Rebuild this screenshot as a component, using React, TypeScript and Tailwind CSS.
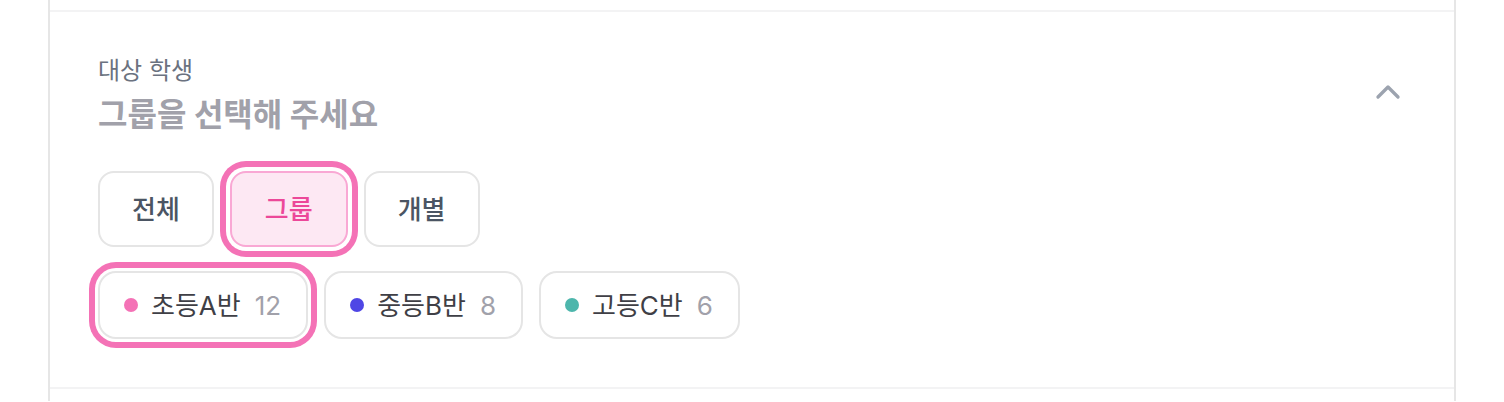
import { ChevronUp } from 'lucide-react';

const modes = [
  { id: 'all', label: '전체' },
  { id: 'group', label: '그룹' },
  { id: 'each', label: '개별' },
];

const groups = [
  { id: 'a', name: '초등A반', count: 12, dot: 'bg-[#f472b6]', focused: true },
  { id: 'b', name: '중등B반', count: 8, dot: 'bg-[#4f46e5]', focused: false },
  { id: 'c', name: '고등C반', count: 6, dot: 'bg-[#4db6ac]', focused: false },
];

export default function App() {
  const selected = 'group';

  return (
    <div className="min-h-[402px] bg-white px-12 font-['Inter','Noto_Sans_CJK_KR',sans-serif]">
      <div className="border-x-2 border-[#e6e6e6] pt-[10px] pb-[12px]">
        <section className="border-y-2 border-[#f3f3f4] px-12 pt-[44px] pb-[48px]">
          <div className="flex items-start justify-between">
            <div>
              <p className="text-[24px] leading-[30px] text-[#6b7280]">대상 학생</p>
              <h2 className="mt-[9px] text-[32px] font-bold leading-[40px] text-[#a1a1aa]">
                그룹을 선택해 주세요
              </h2>
            </div>
            <button className="mt-[16px] -mr-[2px] text-[#9ca3af]">
              <ChevronUp className="h-10 w-10" strokeWidth={2} />
            </button>
          </div>

          <div className="mt-[36px] flex gap-4">
            {modes.map((m) => {
              const active = m.id === selected;
              return (
                <button
                  key={m.id}
                  className={
                    active
                      ? 'flex h-[76px] items-center rounded-[16px] border-2 border-[#f9a8d4] bg-[#fde8f3] px-[33px] text-[26px] font-medium text-[#ec4899] ring-[6px] ring-[#f472b6] ring-offset-4 ring-offset-white'
                      : 'flex h-[76px] items-center rounded-[16px] border-2 border-[#e5e5e5] bg-white px-[32px] text-[26px] font-medium text-[#4b5563]'
                  }
                >
                  {m.label}
                </button>
              );
            })}
          </div>

          <div className="mt-[24px] flex gap-4">
            {groups.map((g) => (
              <button
                key={g.id}
                className={
                  'flex h-[68px] items-center rounded-[18px] border-2 border-[#e5e5e5] bg-white pl-[24px] pr-[25px] text-[26px] ' +
                  (g.focused ? 'ring-[6px] ring-[#f472b6] ring-offset-[3px] ring-offset-white' : '')
                }
              >
                <span className={'h-[14px] w-[14px] rounded-full ' + g.dot} />
                <span className="ml-[13px] text-[#3f3f46]">{g.name}</span>
                <span className="ml-[14px] text-[#a1a1aa]">{g.count}</span>
              </button>
            ))}
          </div>
        </section>
      </div>
    </div>
  );
}
